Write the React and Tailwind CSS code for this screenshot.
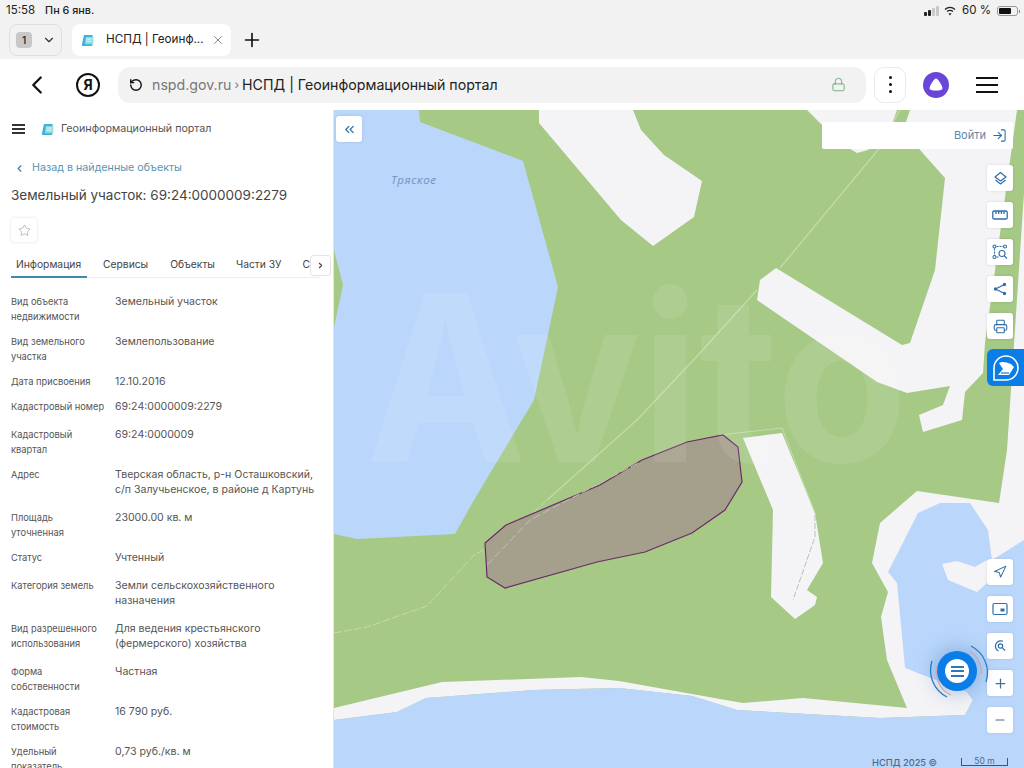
import React from "react";
import { ChevronLeft, ChevronDown, ChevronsLeft, ChevronRight, Star, Printer, LogIn, Plus, Minus, Navigation, X, RotateCw, Lock } from "lucide-react";

function NspdLogo({ size = 14 }) {
  return (
    <svg width={size} height={size} viewBox="0 0 14 14" fill="none">
      <path d="M4 1 H12.5 V11 Q12.5 13 10.5 13 H2 Q0.6 13 1 11.5 L2.8 2.6 Q3.1 1 4 1Z" fill="#3fb0dc" />
      <path d="M5.2 3.2 H13.2 V10 Q13.2 11 12 11 H4.2Z" fill="#8edcdc" />
      <path d="M6 5.5H11.5M5.7 7.8H11.5" stroke="#fff" strokeWidth="0.8" />
    </svg>
  );
}

function StatusBar() {
  return (
    <div className="h-[22px] flex items-center justify-between pl-[6px] pr-[4px] text-[11.5px] text-[#222]">
      <div className="flex items-center gap-[10px]">
        <span>15:58</span>
        <span className="text-[10.8px] font-medium">Пн 6 янв.</span>
      </div>
      <div className="flex items-center">
        <div className="flex items-end gap-[1px] h-[10px] mr-[5px]">
          <span className="w-[3px] h-[4px] bg-[#222] rounded-[1px]"></span>
          <span className="w-[3px] h-[6px] bg-[#222] rounded-[1px]"></span>
          <span className="w-[3px] h-[8px] bg-[#c9c9c9] rounded-[1px]"></span>
          <span className="w-[3px] h-[10px] bg-[#c9c9c9] rounded-[1px]"></span>
        </div>
        <svg width="12" height="10" viewBox="0 0 12 10" fill="none" className="mr-[6px]">
          <path d="M1 3.5C4 .8 8 .8 11 3.5" stroke="#222" strokeWidth="1.3" />
          <path d="M3 5.6C4.8 4.1 7.2 4.1 9 5.6" stroke="#222" strokeWidth="1.3" />
          <path d="M6 9.5L4.5 7.6C5.4 7 6.6 7 7.5 7.6Z" fill="#222" />
        </svg>
        <span className="mr-[6px]">60 %</span>
        <div className="w-[21px] h-[10px] border border-[#999] rounded-[3px] p-[1px] mr-[1px]">
          <div className="w-[12px] h-full bg-[#111] rounded-[1px]"></div>
        </div>
        <span className="w-[1px] h-[3px] bg-[#888]"></span>
      </div>
    </div>
  );
}

function TabBar() {
  return (
    <div className="flex items-center h-[37px] pl-[9px] pb-[1px]">
      <div className="w-[53px] h-[32px] border border-[#dedede] rounded-[8px] flex items-center pl-[6px] gap-[10px] bg-[#f2f2f2]">
        <span className="w-[16px] h-[16px] bg-[#c8c8c8] rounded-[4px] text-[10px] font-semibold flex items-center justify-center text-[#333]">1</span>
        <ChevronDown size={14} strokeWidth={2} className="text-[#333]" />
      </div>
      <div className="ml-[10px] w-[159px] h-[32px] bg-white rounded-[8px] flex items-center pl-[9px] text-[11.7px] text-[#222]">
        <NspdLogo size={13} />
        <span className="ml-[12px] whitespace-nowrap">НСПД | Геоинф...</span>
        <X size={14} strokeWidth={1.5} className="ml-[7px] text-[#777]" />
      </div>
      <Plus size={22} strokeWidth={1.8} className="ml-[10px] text-[#111]" />
    </div>
  );
}

function Toolbar() {
  return (
    <div className="h-[51px] bg-white flex items-center">
      <ChevronLeft size={30} strokeWidth={1.8} className="ml-[22px] text-[#111]" />
      <div className="ml-[24px] w-[24px] h-[24px] border-2 border-[#111] rounded-full flex items-center justify-center text-[14px] font-bold text-[#111]">Я</div>
      <div className="ml-[18px] w-[748px] h-[36px] bg-[#f2f2f2] rounded-[12px] flex items-center pl-[11px] pr-[20px]">
        <RotateCw size={14} strokeWidth={2.4} className="text-[#111] -scale-x-100" />
        <span className="ml-[9px] text-[14.2px] text-[#777] whitespace-nowrap">nspd.gov.ru</span>
        <span className="ml-[3px] text-[12px] text-[#777]">›</span>
        <span className="ml-[3px] text-[14.2px] text-[#222] whitespace-nowrap">НСПД | Геоинформационный портал</span>
        <Lock size={15} strokeWidth={1.4} className="ml-auto text-[#5fa86b]" />
      </div>
      <div className="ml-[8px] w-[32px] h-[36px] border border-[#eaeaea] rounded-[10px] flex flex-col items-center justify-center gap-[4px]">
        <span className="w-[3px] h-[3px] rounded-full bg-[#111]"></span>
        <span className="w-[3px] h-[3px] rounded-full bg-[#111]"></span>
        <span className="w-[3px] h-[3px] rounded-full bg-[#111]"></span>
      </div>
      <div className="ml-[17px] w-[26px] h-[26px] rounded-full bg-[#6a46d8] flex items-center justify-center">
        <svg width="14" height="13" viewBox="0 0 14 13"><path d="M7 .5C9 .5 13.5 8 13.5 10.2 13.5 12 11 12.5 7 12.5S.5 12 .5 10.2C.5 8 5 .5 7 .5Z" fill="#fff" /></svg>
      </div>
      <div className="ml-[27px] w-[22px] flex flex-col gap-[5px]">
        <span className="h-[2px] bg-[#111]"></span>
        <span className="h-[2px] bg-[#111]"></span>
        <span className="h-[2px] bg-[#111]"></span>
      </div>
    </div>
  );
}

const rows = [
  { h: "h-[40px]", l: ["Вид объекта", "недвижимости"], v: ["Земельный участок"] },
  { h: "h-[40px]", l: ["Вид земельного", "участка"], v: ["Землепользование"] },
  { h: "h-[25px]", l: ["Дата присвоения"], v: ["12.10.2016"] },
  { h: "h-[28px]", l: ["Кадастровый номер"], v: ["69:24:0000009:2279"] },
  { h: "h-[40px]", l: ["Кадастровый", "квартал"], v: ["69:24:0000009"] },
  { h: "h-[43px]", l: ["Адрес"], v: ["Тверская область, р-н Осташковский,", "с/п Залучьенское, в районе д Картунь"] },
  { h: "h-[40px]", l: ["Площадь", "уточненная"], v: ["23000.00 кв. м"] },
  { h: "h-[28px]", l: ["Статус"], v: ["Учтенный"] },
  { h: "h-[43px]", l: ["Категория земель"], v: ["Земли сельскохозяйственного", "назначения"] },
  { h: "h-[43px]", l: ["Вид разрешенного", "использования"], v: ["Для ведения крестьянского", "(фермерского) хозяйства"] },
  { h: "h-[40px]", l: ["Форма", "собственности"], v: ["Частная"] },
  { h: "h-[40px]", l: ["Кадастровая", "стоимость"], v: ["16 790 руб."] },
  { h: "h-[40px]", l: ["Удельный", "показатель"], v: ["0,73 руб./кв. м"] },
];

function Panel() {
  return (
    <div className="w-[334px] shrink-0 h-full bg-white overflow-hidden border-r border-[#e4e4e4]">
      <div className="flex items-center h-[38px] pl-[12px]">
        <div className="w-[13px] flex flex-col gap-[2.5px]">
          <span className="h-[1.5px] bg-[#333]"></span>
          <span className="h-[1.5px] bg-[#333]"></span>
          <span className="h-[1.5px] bg-[#333]"></span>
        </div>
        <span className="ml-[16px]"><NspdLogo size={13} /></span>
        <span className="ml-[7px] text-[10.7px] text-[#555] whitespace-nowrap">Геоинформационный портал</span>
      </div>
      <div className="flex items-center mt-[12px] h-[16px] pl-[14px]">
        <ChevronLeft size={11} strokeWidth={2.5} className="text-[#3f7f9f]" />
        <span className="ml-[7px] text-[10.7px] text-[#5a93b3] whitespace-nowrap">Назад в найденные объекты</span>
      </div>
      <div className="mt-[9px] pl-[11px] h-[20px] text-[13.5px] leading-[20px] text-[#444] whitespace-nowrap">Земельный участок: 69:24:0000009:2279</div>
      <div className="mt-[13px] ml-[11px] w-[26px] h-[24px] bg-white rounded-[3px] shadow-[0_0_3px_rgba(0,0,0,0.14)] flex items-center justify-center">
        <Star size={13} strokeWidth={1} className="text-[#888]" />
      </div>
      <div className="relative mt-[12px] ml-[11px] w-[309px] h-[24px] border-b border-[#eeeeee] flex text-[10.3px] text-[#444] whitespace-nowrap">
        <div className="w-[76px] h-[24px] border-b-2 border-[#3e8aa8] pl-[5px] pt-[3px]">Информация</div>
        <div className="ml-[16px] pt-[3px]">Сервисы</div>
        <div className="ml-[22px] pt-[3px]">Объекты</div>
        <div className="ml-[21px] pt-[3px]">Части ЗУ</div>
        <div className="ml-[21px] pt-[3px]">С</div>
        <div className="absolute left-[299px] top-[1px] w-[21px] h-[21px] bg-white border border-[#e4e4e4] rounded-[3px] flex items-center justify-center">
          <ChevronRight size={9} strokeWidth={3} className="text-[#444]" />
        </div>
      </div>
      <div className="mt-[16px] pl-[11px]">
        {rows.map((r) => (
          <div key={r.l[0]} className={`flex ${r.h}`}>
            <div className="w-[104px] shrink-0 text-[9.3px] leading-[15px] text-[#555] whitespace-nowrap">
              {r.l.map((t) => <div key={t}>{t}</div>)}
            </div>
            <div className="text-[10.55px] leading-[15px] text-[#555] whitespace-nowrap">
              {r.v.map((t) => <div key={t}>{t}</div>)}
            </div>
          </div>
        ))}
      </div>
    </div>
  );
}

function MapCanvas() {
  return (
    <svg className="absolute inset-0" width="690" height="658" viewBox="334 110 690 658">
      <rect x="334" y="110" width="690" height="658" fill="#a6c986" />
      <polygon fill="#bad7fb" points="334,110 419,110 420,122 523,161 558,287 534,400 474,500 455,534 357,539 334,534 334,327 343,285 334,250" />
      <polygon fill="#f4f4f6" points="539,110 633,110 641,130 664,155 702,181 694,217 653,246 621,220 539,123" />
      <polygon fill="#f4f4f6" points="807,110 897,110 890,130 868,150 857,153 847,147 822,125" />
      <polygon fill="#f4f4f6" points="910,110 1017,110 985,343 983,373 965,392 962,420 923,432 919,415 943,405 950,386 907,393 877,382 757,300 760,280 776,268 902,345 910,343 935,270 945,178 920,150 905,125" />
      <polygon fill="#f4f4f6" points="1024,193 1007,450 999,503 917,491 880,523 872,563 888,592 881,617 887,660 907,708 803,698 743,703 720,699 692,694 619,681 581,677 442,682 334,708 334,720 397,712 426,698 534,690 619,688 692,696 737,710 880,718 965,715 973,700 967,692 1024,692 1024,193" />
      <polygon fill="#bad7fb" points="918,513 940,503 970,503 988,530 992,560 1024,540 1024,768 334,768 334,720 397,712 426,698 534,690 619,688 692,696 737,710 880,718 965,715 973,700 967,692 905,668 897,583 888,572" />
      <polygon fill="#f4f4f6" points="942,564 957,561 975,567 987,560 987,583 977,592 948,580" />
      <polygon fill="#f4f4f6" points="743,438 782,433 815,513 823,563 807,590 817,597 815,605 795,619 771,597 773,510" />
      <polyline fill="none" stroke="#c4dcaa" strokeWidth="1.3" points="547,500 637,420 700,353 757,290" />
      <polyline fill="none" stroke="#c4dcaa" strokeWidth="1.3" points="780,268 878,150 900,110" />
      <polyline fill="none" stroke="#c4dcaa" strokeWidth="1" strokeDasharray="8 2" points="334,633 367,627 427,606 474,555 507,537 547,500" />
      <polyline fill="none" stroke="#c4dcaa" strokeWidth="1" points="720,435 782,428 815,513" />
      <polyline fill="none" stroke="#bdbdb8" strokeWidth="1" strokeDasharray="6 2" points="815,515 815,537 793,600" />
      <polygon fill="#a5a08c" stroke="#6b2a66" strokeWidth="1.2" points="485,543 506,525 600,485 642,460 687,442 723,435 738,447 742,482 725,510 692,533 645,552 597,562 505,588 487,577" />
      <polyline fill="none" stroke="#c0bfb2" strokeWidth="1" strokeDasharray="8 3" points="487,565 530,520 640,462" />
      <text x="366" y="462" fontFamily="Inter, sans-serif" fontSize="232" fontWeight="700" fill="#ffffff" fillOpacity="0.09" textLength="542" lengthAdjust="spacingAndGlyphs">Avito</text>
      <text x="391" y="184" fontFamily="'Open Sans', sans-serif" fontSize="11.5" fontStyle="italic" fill="#6f93bf" letterSpacing="0.6">Тряское</text>
    </svg>
  );
}

function MapButton({ children, className }) {
  return (
    <div className={`w-[26px] h-[26px] bg-white rounded-[3px] shadow-[0_0_3px_rgba(0,0,0,0.12)] flex items-center justify-center text-[#2f6ea8] ${className || ""}`}>
      {children}
    </div>
  );
}

function MapArea() {
  return (
    <div className="relative flex-1 h-full overflow-hidden">
      <MapCanvas />
      <MapButton className="absolute left-[2px] top-[6px]"><ChevronsLeft size={15} strokeWidth={2} /></MapButton>
      <div className="absolute left-[488px] top-[12px] w-[191px] h-[27px] bg-white rounded-[2px] flex items-center justify-end pr-[6px] text-[#5d88ad] text-[11px]">
        <span>Войти</span>
        <LogIn size={15} strokeWidth={1.7} className="ml-[6px] text-[#2f6ea8]" />
      </div>
      <div className="absolute left-[653px] top-[55px] flex flex-col gap-[11px]">
        <MapButton>
          <svg width="15" height="15" viewBox="0 0 15 15" fill="none" stroke="currentColor" strokeWidth="1.2" strokeLinejoin="round"><path d="M7.5 1.5 13 6 7.5 10 2 6Z" /><path d="M2.5 9 7.5 13 12.5 9" /></svg>
        </MapButton>
        <MapButton>
          <svg width="16" height="10" viewBox="0 0 16 10" fill="none" stroke="currentColor" strokeWidth="1.3"><rect x="0.8" y="1" width="14.4" height="8" rx="1.3" /><path d="M4 1v3M6.7 1v3M9.4 1v3M12 1v3" /></svg>
        </MapButton>
        <MapButton>
          <svg width="16" height="16" viewBox="0 0 16 16" fill="none" stroke="currentColor" strokeWidth="1.1"><circle cx="2.5" cy="2.5" r="1.5" /><circle cx="13" cy="2.5" r="1.5" /><circle cx="2.5" cy="13" r="1.5" /><path d="M4.5 2.5H11M2.5 4.5V11M4.5 13H7" strokeDasharray="2 1" /><circle cx="10" cy="9.5" r="3" /><path d="M12.2 11.7 15 14.5" /></svg>
        </MapButton>
        <MapButton>
          <svg width="14" height="14" viewBox="0 0 14 14" fill="#2f6ea8" stroke="#2f6ea8" strokeWidth="1.3"><path d="M11.5 2.5 2.5 7 11.5 11.5" fill="none" /><circle cx="11.5" cy="2.5" r="1" /><circle cx="2.5" cy="7" r="1" /><circle cx="11.5" cy="11.5" r="1" /></svg>
        </MapButton>
        <MapButton><Printer size={15} strokeWidth={1.7} /></MapButton>
      </div>
      <div className="absolute left-[653px] top-[239px] w-[37px] h-[37px] bg-[#0b7de6] rounded-l-[6px] flex items-center justify-center">
        <svg width="28" height="28" viewBox="0 0 28 28" fill="none">
          <path d="M2 26V14A12 12 0 1 1 14 26Z" stroke="#fff" strokeWidth="1.6" />
          <path d="M7 9C10 7 14 8 19 10L22 13 17 21H6L11 15Z" fill="#fff" />
          <path d="M9 19H17" stroke="#0b7de6" strokeWidth="1.2" />
        </svg>
      </div>
      <div className="absolute left-[653px] top-[449px] flex flex-col gap-[11px]">
        <MapButton><Navigation size={14} strokeWidth={1.7} className="text-[#1f5f98]" /></MapButton>
        <MapButton>
          <svg width="16" height="14" viewBox="0 0 16 14" fill="none" stroke="currentColor" strokeWidth="1.2"><rect x="1" y="1.5" width="14" height="11" rx="1.5" /><rect x="8.5" y="6.5" width="4" height="3" fill="currentColor" stroke="none" /></svg>
        </MapButton>
        <MapButton>
          <svg width="14" height="14" viewBox="0 0 14 14" fill="none" stroke="currentColor" strokeWidth="1.2"><path d="M10 2.3A5.2 5.2 0 1 0 5.5 12" /><circle cx="7.5" cy="7" r="2.2" /><path d="M9.2 8.7 12 11.5" /></svg>
        </MapButton>
        <MapButton><Plus size={15} strokeWidth={2} className="text-[#44718f]" /></MapButton>
        <MapButton><Minus size={14} strokeWidth={2} className="text-[#44718f]" /></MapButton>
      </div>
      <div className="absolute left-[603px] top-[541px] w-[40px] h-[40px] rounded-full bg-[#0b7de6] shadow-[0_0_22px_rgba(40,90,170,0.45)] flex items-center justify-center">
        <div className="relative w-[24px] h-[24px] bg-white rounded-full flex flex-col items-center justify-center gap-[2.5px]">
          <span className="w-[13px] h-[2px] bg-[#2f78b8]"></span>
          <span className="w-[13px] h-[2px] bg-[#2f78b8]"></span>
          <span className="w-[13px] h-[2px] bg-[#2f78b8]"></span>
        </div>
      </div>
      <svg className="absolute left-[592px] top-[531px]" width="68" height="60" viewBox="0 0 68 60" fill="none">
        <path d="M45 5A30 30 0 0 1 60 41" stroke="#2a7cc0" strokeWidth="1.3" />
        <path d="M44 10A25 25 0 0 1 55 33" stroke="#c6a9b5" strokeWidth="1.2" />
        <path d="M6 20A30 30 0 0 0 21 56" stroke="#2a7cc0" strokeWidth="1.3" />
        <path d="M11 26A25 25 0 0 0 25 54" stroke="#c6a9b5" strokeWidth="1.2" />
      </svg>
      <div className="absolute left-[538px] top-[646px] text-[9.3px] font-medium text-[#4d6a8c] whitespace-nowrap">НСПД 2025 ©</div>
      <div className="absolute left-[627px] top-[648px] w-[47px] h-[8px] border-b border-x border-[#44546a] flex justify-center text-[8.5px] leading-[6px] text-[#4d6a8c]">50 m</div>
    </div>
  );
}

export default function App() {
  return (
    <div className="w-[1024px] h-[768px] overflow-hidden bg-white font-['Inter',sans-serif] flex flex-col">
      <div className="h-[59px] bg-[#f2f2f2] shrink-0">
        <StatusBar />
        <TabBar />
      </div>
      <Toolbar />
      <div className="flex-1 min-h-0 flex">
        <Panel />
        <MapArea />
      </div>
    </div>
  );
}
